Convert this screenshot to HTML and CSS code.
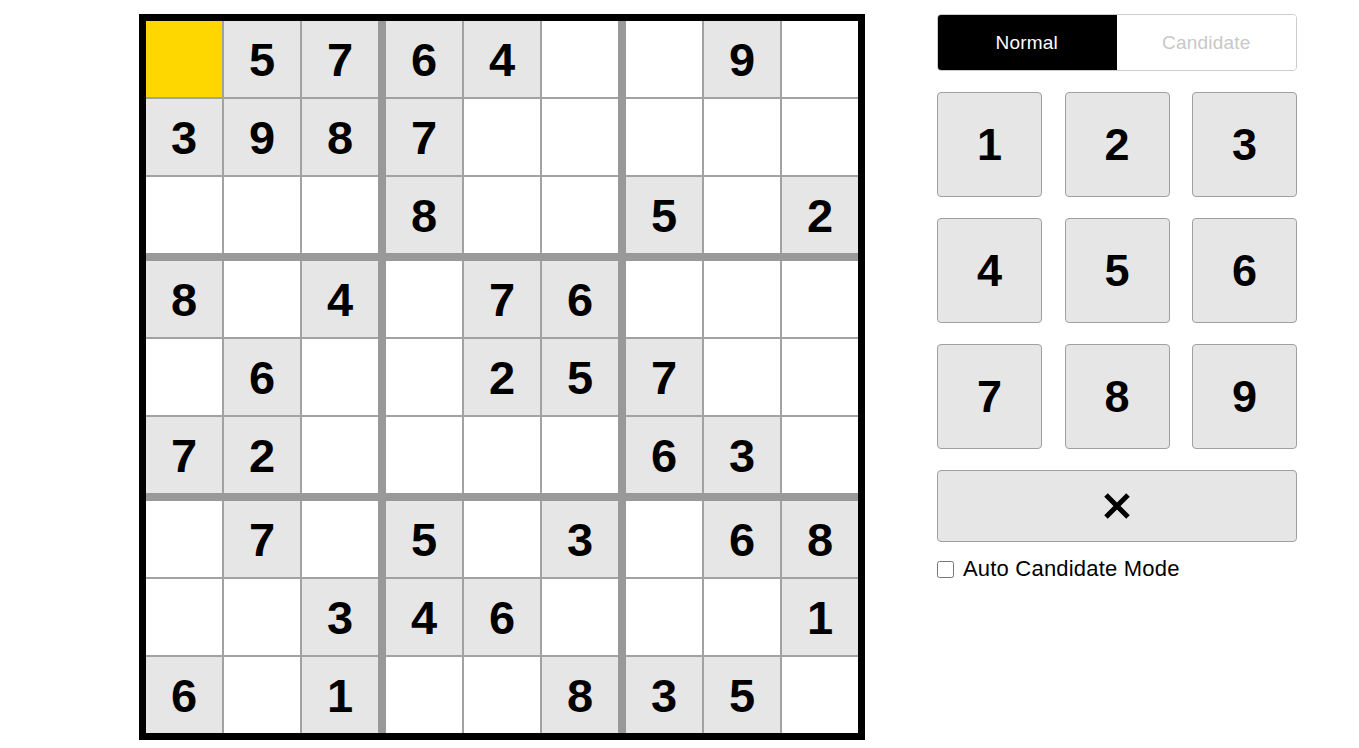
FILE: index.html
```html
<!DOCTYPE html>
<html>
<head>
<meta charset="utf-8">
<title>Sudoku</title>
<link rel="stylesheet" href="styles.css">
</head>
<body>
<main class="game">
  <div class="board">
    <div class="box">
      <div class="cell selected"></div><div class="cell given">5</div><div class="cell given">7</div>
      <div class="cell given">3</div><div class="cell given">9</div><div class="cell given">8</div>
      <div class="cell"></div><div class="cell"></div><div class="cell"></div>
    </div>
    <div class="box">
      <div class="cell given">6</div><div class="cell given">4</div><div class="cell"></div>
      <div class="cell given">7</div><div class="cell"></div><div class="cell"></div>
      <div class="cell given">8</div><div class="cell"></div><div class="cell"></div>
    </div>
    <div class="box">
      <div class="cell"></div><div class="cell given">9</div><div class="cell"></div>
      <div class="cell"></div><div class="cell"></div><div class="cell"></div>
      <div class="cell given">5</div><div class="cell"></div><div class="cell given">2</div>
    </div>
    <div class="box">
      <div class="cell given">8</div><div class="cell"></div><div class="cell given">4</div>
      <div class="cell"></div><div class="cell given">6</div><div class="cell"></div>
      <div class="cell given">7</div><div class="cell given">2</div><div class="cell"></div>
    </div>
    <div class="box">
      <div class="cell"></div><div class="cell given">7</div><div class="cell given">6</div>
      <div class="cell"></div><div class="cell given">2</div><div class="cell given">5</div>
      <div class="cell"></div><div class="cell"></div><div class="cell"></div>
    </div>
    <div class="box">
      <div class="cell"></div><div class="cell"></div><div class="cell"></div>
      <div class="cell given">7</div><div class="cell"></div><div class="cell"></div>
      <div class="cell given">6</div><div class="cell given">3</div><div class="cell"></div>
    </div>
    <div class="box">
      <div class="cell"></div><div class="cell given">7</div><div class="cell"></div>
      <div class="cell"></div><div class="cell"></div><div class="cell given">3</div>
      <div class="cell given">6</div><div class="cell"></div><div class="cell given">1</div>
    </div>
    <div class="box">
      <div class="cell given">5</div><div class="cell"></div><div class="cell given">3</div>
      <div class="cell given">4</div><div class="cell given">6</div><div class="cell"></div>
      <div class="cell"></div><div class="cell"></div><div class="cell given">8</div>
    </div>
    <div class="box">
      <div class="cell"></div><div class="cell given">6</div><div class="cell given">8</div>
      <div class="cell"></div><div class="cell"></div><div class="cell given">1</div>
      <div class="cell given">3</div><div class="cell given">5</div><div class="cell"></div>
    </div>
  </div>

  <section class="panel">
    <div class="mode-toggle">
      <button class="mode active">Normal</button>
      <button class="mode">Candidate</button>
    </div>
    <div class="keypad">
      <button class="key">1</button>
      <button class="key">2</button>
      <button class="key">3</button>
      <button class="key">4</button>
      <button class="key">5</button>
      <button class="key">6</button>
      <button class="key">7</button>
      <button class="key">8</button>
      <button class="key">9</button>
    </div>
    <button class="erase" aria-label="Erase">
      <svg class="erase-icon" width="28" height="26" viewBox="0 0 28 26">
        <path d="M3 2 L25 24 M25 2 L3 24" stroke="#000" stroke-width="5" fill="none"/>
      </svg>
    </button>
    <label class="auto">
      <input type="checkbox" class="auto-box">
      <span>Auto Candidate Mode</span>
    </label>
  </section>
</main>
</body>
</html>
```

FILE: styles.css
```css
html, body {
  margin: 0;
  padding: 0;
  background: #ffffff;
  font-family: "Liberation Sans", Arial, sans-serif;
  color: #000;
}

.game {
  display: flex;
  align-items: flex-start;
  gap: 72px;
  padding: 14px 0 0 139px;
}

.board {
  display: grid;
  grid-template-columns: repeat(3, 232px);
  grid-template-rows: repeat(3, 232px);
  gap: 8px;
  border: 7px solid #000;
  background: #999999;
  width: 712px;
  height: 712px;
}

.box {
  display: grid;
  grid-template-columns: repeat(3, 76px);
  grid-template-rows: repeat(3, 76px);
  gap: 2px;
  background: #a2a2a2;
}

.cell {
  background: #ffffff;
  display: flex;
  align-items: center;
  justify-content: center;
  font-weight: 700;
  font-size: 47px;
  line-height: 1;
  padding-top: 0;
  box-sizing: border-box;
}

.cell.given {
  background: #e6e6e6;
}

.cell.selected {
  background: #ffd700;
}

.panel {
  width: 360px;
  display: flex;
  flex-direction: column;
}

.mode-toggle {
  display: flex;
  height: 57px;
  border: 1px solid #cccccc;
  border-radius: 4px;
  box-sizing: border-box;
  overflow: hidden;
}

.mode {
  flex: 1;
  border: 0;
  background: #ffffff;
  color: #c8c8c8;
  font-family: "Liberation Sans", Arial, sans-serif;
  font-size: 19px;
  letter-spacing: 0.2px;
  padding: 0;
}

.mode.active {
  background: #000000;
  color: #ffffff;
  margin: -1px 0 -1px -1px;
  border-radius: 4px 0 0 4px;
}

.keypad {
  margin-top: 21px;
  display: grid;
  grid-template-columns: repeat(3, 105px);
  grid-auto-rows: 105px;
  column-gap: 22px;
  row-gap: 21px;
  justify-content: space-between;
}

.key {
  background: #e6e6e6;
  border: 1px solid #a0a0a0;
  border-radius: 4px;
  font-family: "Liberation Sans", Arial, sans-serif;
  font-weight: 700;
  font-size: 45px;
  color: #000;
  padding: 0;
}

.erase {
  margin-top: 21px;
  height: 72px;
  background: #e6e6e6;
  border: 1px solid #a0a0a0;
  border-radius: 4px;
  padding: 0;
  display: flex;
  align-items: center;
  justify-content: center;
}

.erase-icon {
  display: block;
}

.auto {
  margin-top: 14px;
  display: flex;
  align-items: center;
  gap: 9px;
  font-size: 22px;
  letter-spacing: 0.2px;
}

.auto-box {
  margin: 0;
  width: 17px;
  height: 17px;
}
```
